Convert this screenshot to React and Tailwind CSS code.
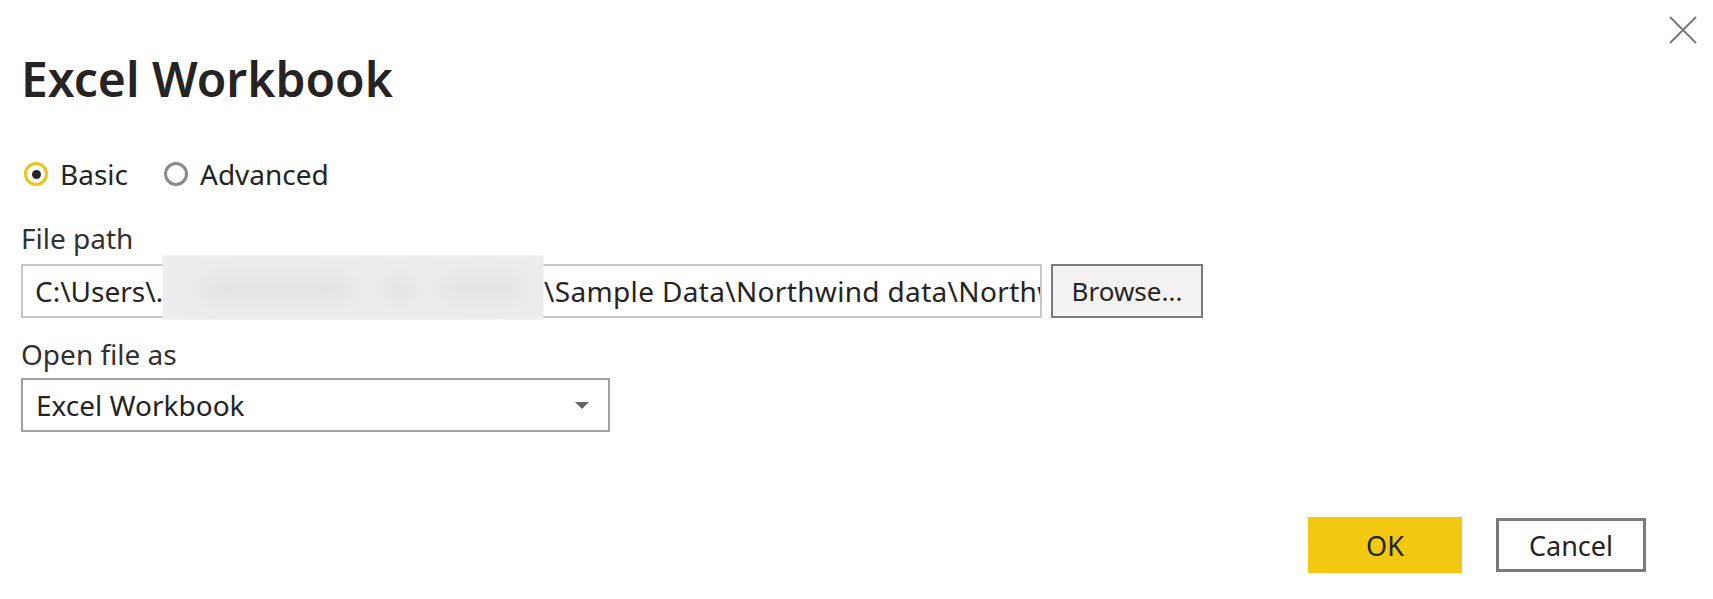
import React, { useState } from 'react';

const FONT = { fontFamily: '"Noto Sans", "Open Sans", Arial, sans-serif' };

const Radio = ({ checked, label, onClick }) => (
  <button onClick={onClick} className="flex items-center h-[28px] gap-[12px]">
    <span
      className={
        checked
          ? 'w-[24px] h-[24px] rounded-full border-[3px] border-[#e8c51a] flex items-center justify-center'
          : 'w-[24px] h-[24px] rounded-full border-[3px] border-[#8a8a8a] flex items-center justify-center'
      }
    >
      {checked && <span className="w-[9px] h-[9px] rounded-full bg-[#252423]" />}
    </span>
    <span className="text-[28px] leading-none text-[#252423]">{label}</span>
  </button>
);

export default function App() {
  const [mode, setMode] = useState('basic');

  return (
    <div className="relative w-[1713px] h-[599px] bg-white text-[#252423]" style={FONT}>
      {/* Close */}
      <button className="absolute top-[16px] left-[1669px] w-[28px] h-[28px]">
        <svg viewBox="0 0 28 28" className="w-[28px] h-[28px]">
          <path d="M1 1 L27 27 M27 1 L1 27" stroke="#7a7a7a" strokeWidth="2" fill="none" />
        </svg>
      </button>

      <div className="flex flex-col pl-[21px] pt-[55px]">
        <h1 className="text-[48px] leading-none font-semibold text-[#252423] h-[50px]">Excel Workbook</h1>

        {/* Mode */}
        <div className="flex items-center gap-[36px] mt-[55px] pl-[3px]">
          <Radio checked={mode === 'basic'} label="Basic" onClick={() => setMode('basic')} />
          <Radio checked={mode === 'advanced'} label="Advanced" onClick={() => setMode('advanced')} />
        </div>

        {/* File path */}
        <label className="mt-[36px] text-[28px] leading-none text-[#323130]">File path</label>
        <div className="flex mt-[12px] gap-[9px]">
          <div className="relative w-[1021px] h-[54px] border-2 border-[#c8c8c8] bg-white">
            <div className="flex items-center h-full overflow-hidden whitespace-nowrap pl-[12px] text-[28px] leading-none">
              <span className="w-[127px] shrink-0 overflow-hidden">C:\Users\.</span>
              <span className="w-[382px] shrink-0" />
              <span className="shrink-0 tracking-[0.012em]">\Sample Data\Northwind data\Northwind.xlsx</span>
            </div>
            {/* redacted part */}
            <div className="absolute left-[139px] top-[-11px] w-[382px] h-[65px] overflow-hidden">
              <div className="w-full h-full bg-[#ededed] blur-[1px]" />
              <div className="absolute left-[40px] top-[22px] w-[150px] h-[24px] rounded-full bg-[#e2e2e2] blur-[10px]" />
              <div className="absolute left-[222px] top-[20px] w-[30px] h-[28px] rounded-full bg-[#e4e4e4] blur-[8px]" />
              <div className="absolute left-[280px] top-[22px] w-[80px] h-[22px] rounded-full bg-[#e2e2e2] blur-[10px]" />
            </div>
          </div>
          <button className="w-[152px] h-[54px] border-2 border-[#7a7a7a] bg-[#f3f2f1] text-[26px] leading-none text-[#252423]">
            Browse...
          </button>
        </div>

        {/* Open file as */}
        <label className="mt-[22px] text-[28px] leading-none text-[#323130]">Open file as</label>
        <div className="mt-[10px] w-[589px] h-[54px] border-2 border-[#a0a0a0] flex items-center justify-between pl-[13px] pr-[19px]">
          <span className="text-[28px] leading-none text-[#252423]">Excel Workbook</span>
          <svg viewBox="0 0 14 7" className="w-[14px] h-[7px]">
            <path d="M0 0 L14 0 L7 7 Z" fill="#666666" />
          </svg>
        </div>

        {/* Actions */}
        <div className="flex justify-end gap-[34px] mt-[85px] pr-[67px]">
          <button className="w-[154px] h-[56px] bg-[#f2c811] text-[27px] leading-none text-[#252423]">OK</button>
          <button className="w-[150px] h-[54px] mt-[1px] border-[3px] border-[#7a7a7a] bg-white text-[27px] leading-none text-[#252423]">
            Cancel
          </button>
        </div>
      </div>
    </div>
  );
}
